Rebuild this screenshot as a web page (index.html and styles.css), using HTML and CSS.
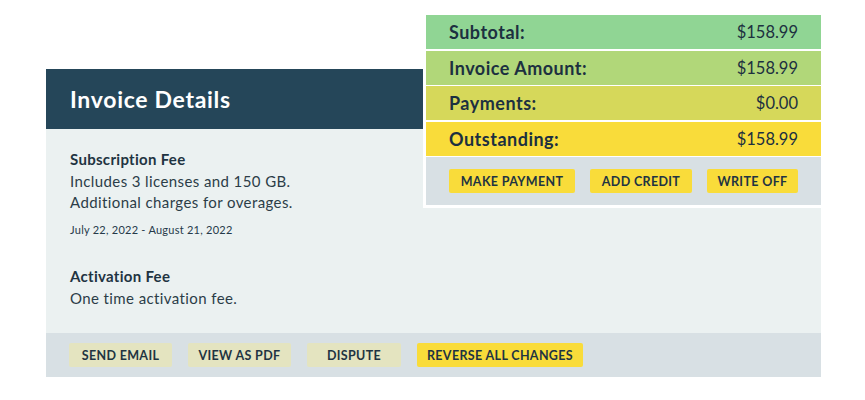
FILE: index.html
```html
<!DOCTYPE html>
<html lang="en">
<head>
<meta charset="utf-8">
<title>Invoice Details</title>
<link rel="stylesheet" href="styles.css">
</head>
<body>
<div class="stage">
  <section class="card">
    <header class="card-head">
      <h1>Invoice Details</h1>
    </header>
    <div class="card-body">
      <div class="item">
        <h2>Subscription Fee</h2>
        <p>Includes 3 licenses and 150 GB.<br>Additional charges for overages.</p>
        <p class="dates">July 22, 2022 - August 21, 2022</p>
      </div>
      <div class="item item-second">
        <h2>Activation Fee</h2>
        <p>One time activation fee.</p>
      </div>
    </div>
    <footer class="card-foot">
      <button class="btn btn-muted w-email">SEND EMAIL</button>
      <button class="btn btn-muted w-pdf">VIEW AS PDF</button>
      <button class="btn btn-muted w-dispute">DISPUTE</button>
      <button class="btn btn-yellow w-reverse">REVERSE ALL CHANGES</button>
    </footer>
  </section>

  <aside class="summary">
    <div class="row row-1"><span>Subtotal:</span><span class="amt">$158.99</span></div>
    <div class="row row-2"><span>Invoice Amount:</span><span class="amt">$158.99</span></div>
    <div class="row row-3"><span>Payments:</span><span class="amt">$0.00</span></div>
    <div class="row row-4"><span>Outstanding:</span><span class="amt">$158.99</span></div>
    <div class="actions">
      <button class="btn btn-yellow w-pay">MAKE PAYMENT</button>
      <button class="btn btn-yellow w-credit">ADD CREDIT</button>
      <button class="btn btn-yellow w-write">WRITE OFF</button>
    </div>
  </aside>
</div>
</body>
</html>
```
FILE: styles.css
```css
* { box-sizing: border-box; }
html, body { margin: 0; padding: 0; background: #ffffff; }
body {
  font-family: Lato, "Noto Sans", "Liberation Sans", sans-serif;
  color: #1f3442;
}
.stage {
  position: relative;
  width: 865px;
  height: 400px;
  padding: 69px 0 0 46px;
}
.card {
  width: 775px;
  background: #ebf1f1;
}
.card-head {
  height: 60px;
  background: #254659;
  display: flex;
  align-items: center;
  padding-left: 24px;
}
.card-head h1 {
  margin: 0;
  color: #ffffff;
  font-size: 23px;
  font-weight: 700;
  letter-spacing: 0.7px;
}
.card-body {
  height: 204px;
  padding: 19px 24px 0 24px;
}
.item h2 {
  margin: 0;
  font-size: 15px;
  line-height: 22px;
  font-weight: 700;
  letter-spacing: 0.3px;
  color: #1f3442;
}
.item p {
  margin: 0;
  font-size: 15px;
  line-height: 21px;
  letter-spacing: 0.4px;
  color: #2b3d48;
  padding-top: 1px;
}
.item p.dates {
  font-size: 11px;
  line-height: 18px;
  letter-spacing: 0.25px;
  padding-top: 8px;
  color: #26394a;
}
.item-second {
  margin-top: 26px;
}
.card-foot {
  height: 44px;
  background: #d8e0e4;
  display: flex;
  align-items: center;
  gap: 16px;
  padding-left: 23px;
}
.btn {
  border: 0;
  height: 24px;
  border-radius: 2px;
  font-family: inherit;
  font-size: 12.5px;
  font-weight: 700;
  letter-spacing: 0.35px;
  color: #1f3442;
  padding: 0;
  text-align: center;
}
.btn-muted { background: #e4e4c0; }
.btn-yellow { background: #f9dc3a; }
.w-email { width: 103px; }
.w-pdf { width: 103px; }
.w-dispute { width: 94px; }
.w-reverse { width: 166px; }
.w-pay { width: 126px; }
.w-credit { width: 102px; }
.w-write { width: 91px; }

.summary {
  position: absolute;
  top: 12px;
  left: 423px;
  width: 401px;
  border: 3px solid #ffffff;
  background: #ffffff;
  display: flex;
  flex-direction: column;
  gap: 1.5px;
}
.row {
  height: 34px;
  display: flex;
  align-items: center;
  justify-content: space-between;
  padding: 0 23px;
  font-size: 18px;
  font-weight: 700;
  letter-spacing: 0.5px;
  color: #1c3040;
}
.row .amt {
  font-weight: 400;
  font-size: 16.5px;
  letter-spacing: 0;
}
.row-1 { background: #90d594; }
.row-2 { background: #b1d779; }
.row-3 { background: #d6d85a; }
.row-4 { background: #f9dc3a; }
.actions {
  height: 48px;
  background: #d8e0e4;
  display: flex;
  align-items: center;
  gap: 15px;
  padding-left: 23px;
}
```
